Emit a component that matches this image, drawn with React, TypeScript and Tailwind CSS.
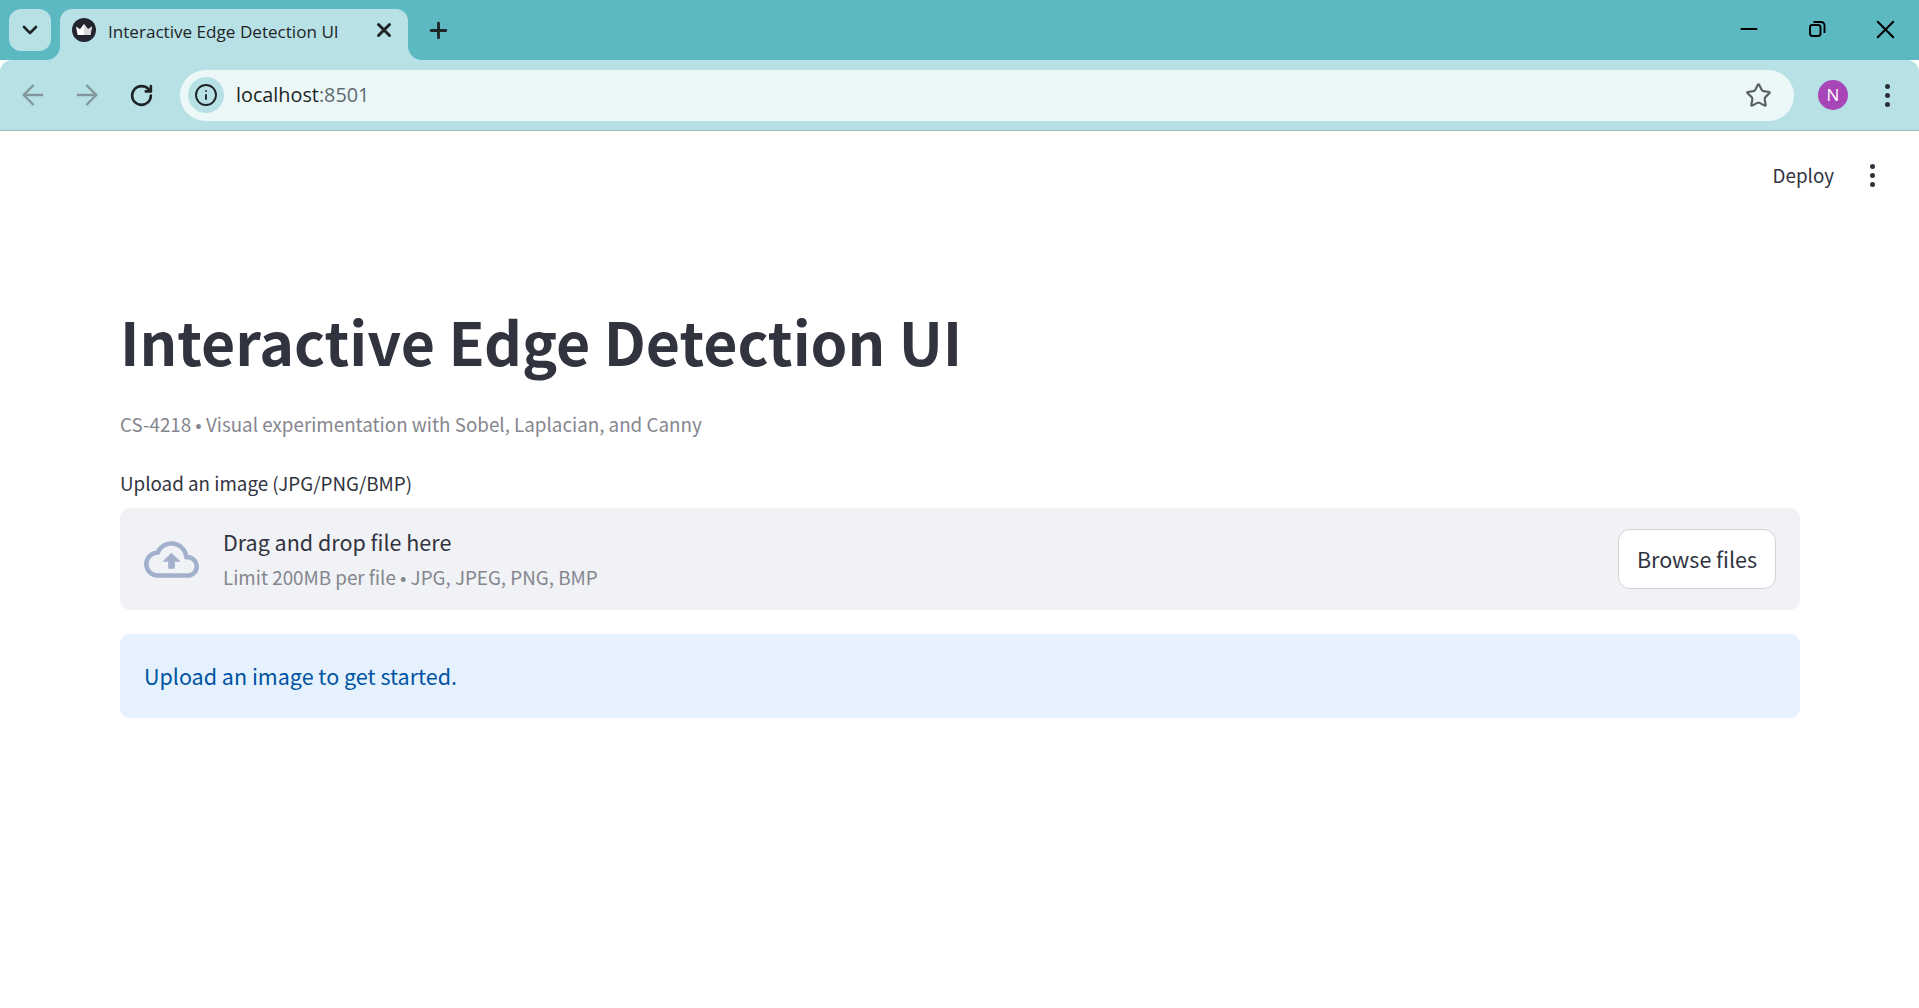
import { ArrowLeft, ArrowRight, RotateCw, Info, Star, X, Plus, Minus, ChevronDown } from "lucide-react";

const chrome = "font-['Open_Sans','Noto_Sans',sans-serif]";
const page = "font-['Noto_Sans_CJK_JP','Noto_Sans',sans-serif]";

function Dots({ className }: { className: string }) {
  return (
    <div className={`flex flex-col items-center gap-[4px] ${className}`}>
      <span className="h-[5px] w-[5px] rounded-full bg-current" />
      <span className="h-[5px] w-[5px] rounded-full bg-current" />
      <span className="h-[5px] w-[5px] rounded-full bg-current" />
    </div>
  );
}

function Crown() {
  return (
    <svg width="24" height="24" viewBox="0 0 24 24" className="shrink-0">
      <circle cx="12" cy="12" r="12" fill="#24242f" />
      <path d="M4 8.5l4 2.8L12 6l4 5.3 4-2.8-1.6 8.5H5.6z" fill="#fff" />
      <path d="M12 6l4 5.3 4-2.8-1.6 8.5H12z" fill="#d8d8dc" />
    </svg>
  );
}

function Flare({ side }: { side: "left" | "right" }) {
  return (
    <svg
      width="14"
      height="14"
      viewBox="0 0 14 14"
      className={`absolute bottom-0 ${side === "left" ? "left-[-14px]" : "right-[-14px] -scale-x-100"}`}
    >
      <path d="M14 0v14H0A14 14 0 0 0 14 0z" fill="#b7e1e5" />
    </svg>
  );
}

export default function App() {
  return (
    <div className="flex h-[1008px] w-full flex-col overflow-hidden bg-white">
      <div className={`flex h-[60px] items-end bg-[#5cb9c2] ${chrome}`}>
        <div className="mb-[9px] ml-[9px] flex h-[42px] w-[42px] items-center justify-center rounded-[12px] bg-[#b7e1e5] text-[#1f2427]">
          <ChevronDown size={24} strokeWidth={2.6} />
        </div>
        <div className="relative ml-[9px] flex h-[51px] w-[348px] items-center rounded-t-[12px] bg-[#b7e1e5] pb-[9px] pl-[12px] pr-[13px] text-[#1f2427]">
          <Flare side="left" />
          <Flare side="right" />
          <Crown />
          <span className="ml-[12px] mt-[3px] flex-1 whitespace-nowrap text-[17.1px] leading-[24px]">Interactive Edge Detection UI</span>
          <X size={22} strokeWidth={3.2} />
        </div>
        <div className="mb-[9px] ml-[9px] flex h-[42px] w-[42px] items-center justify-center text-[#1f2427]">
          <Plus size={25} strokeWidth={2.7} />
        </div>
        <div className="mb-[2px] ml-auto flex h-[58px] items-center text-black">
          <div className="flex w-[68px] justify-center">
            <Minus size={26} strokeWidth={1.9} />
          </div>
          <div className="flex w-[68px] justify-center">
            <svg width="24" height="24" viewBox="0 0 24 24" fill="none" stroke="currentColor" strokeWidth="1.9">
              <rect x="5" y="8" width="10.5" height="11" rx="2.4" />
              <path d="M8.5 5h7.5a3.5 3.5 0 0 1 3.5 3.5v7.5" />
            </svg>
          </div>
          <div className="flex w-[68px] justify-center">
            <X size={31} strokeWidth={1.6} />
          </div>
        </div>
      </div>

      <div className={`flex h-[71px] items-center rounded-t-[12px] border-b border-[#9db9bd] bg-[#b7e1e5] ${chrome}`}>
        <div className="ml-[6px] flex items-center text-[#82979b]">
          <div className="flex w-[54px] justify-center"><ArrowLeft size={32} strokeWidth={1.7} /></div>
          <div className="flex w-[54px] justify-center"><ArrowRight size={32} strokeWidth={1.7} /></div>
          <div className="flex w-[54px] justify-center"><RotateCw size={25} strokeWidth={2.5} className="text-[#1f2427]" /></div>
        </div>
        <div className="ml-[12px] flex h-[51px] flex-1 items-center rounded-full bg-[#ecf8f8] pl-[8px] pr-[22px]">
          <div className="flex h-[36px] w-[36px] items-center justify-center rounded-full bg-[#b7e1e5] text-[#1f2427]">
            <Info size={24} strokeWidth={1.9} />
          </div>
          <span className="ml-[12px] text-[19.8px] leading-[28px] text-[#1b1f22]">
            localhost<span className="text-[#5f6a70]">:8501</span>
          </span>
          <Star size={27} strokeWidth={1.9} className="ml-auto text-[#5a5f62]" />
        </div>
        <div className="ml-[24px] flex h-[30px] w-[30px] items-center justify-center rounded-full bg-[#a845b8] text-[17px] text-white">N</div>
        <Dots className="ml-[37px] mr-[29px] text-[#2a3033]" />
      </div>

      <div className={`flex flex-1 flex-col pl-[120px] pr-[119px] ${page}`}>
        <div className="-mr-[119px] flex h-[88px] items-center justify-end text-[#31333f]">
          <span className="text-[18.8px] leading-[28px]">Deploy</span>
          <Dots className="ml-[36px] mr-[44px]" />
        </div>
        <h1 className="mt-[82px] whitespace-nowrap text-[59px] font-bold leading-[80px] text-[#31333f]">Interactive Edge Detection UI</h1>
        <p className="mt-[27px] text-[18.8px] leading-[32px] text-[#85868e]">CS-4218 • Visual experimentation with Sobel, Laplacian, and Canny</p>
        <label className="mt-[29px] text-[18.8px] leading-[28px] text-[#31333f]">Upload an image (JPG/PNG/BMP)</label>
        <div className="mt-[11px] flex h-[102px] items-center rounded-[10px] bg-[#f0f2f6] pl-[24px] pr-[24px]">
          <svg width="55" height="55" viewBox="0 0 24 24" fill="#a3b0cc" className="shrink-0">
            <path d="M19.35 10.04C18.67 6.59 15.64 4 12 4 9.11 4 6.6 5.64 5.35 8.04 2.34 8.36 0 10.91 0 14c0 3.31 2.69 6 6 6h13c2.76 0 5-2.24 5-5 0-2.64-2.05-4.78-4.65-4.96zM19 18H6c-2.21 0-4-1.79-4-4 0-2.05 1.53-3.76 3.56-3.97l1.07-.11.5-.95C8.08 7.14 9.94 6 12 6c2.62 0 4.88 1.86 5.39 4.43l.3 1.5 1.53.11c1.56.1 2.78 1.41 2.78 2.96 0 1.65-1.35 3-3 3zM8 13h2.55v3h2.9v-3H16l-4-4z" />
          </svg>
          <div className="ml-[24px] flex flex-col gap-[5px]">
            <span className="text-[21.5px] leading-[30px] text-[#31333f]">Drag and drop file here</span>
            <span className="text-[18.8px] leading-[30px] text-[#85868e]">Limit 200MB per file • JPG, JPEG, PNG, BMP</span>
          </div>
          <button className="ml-auto flex h-[60px] w-[158px] items-center justify-center rounded-[12px] border border-[#d2d3d8] bg-white text-[21.5px] text-[#31333f]">Browse files</button>
        </div>
        <div className="mt-[24px] flex h-[84px] items-center rounded-[10px] bg-[#e6f1fe] px-[24px] text-[21.5px] leading-[34px] text-[#0054a3]">Upload an image to get started.</div>
      </div>
    </div>
  );
}
